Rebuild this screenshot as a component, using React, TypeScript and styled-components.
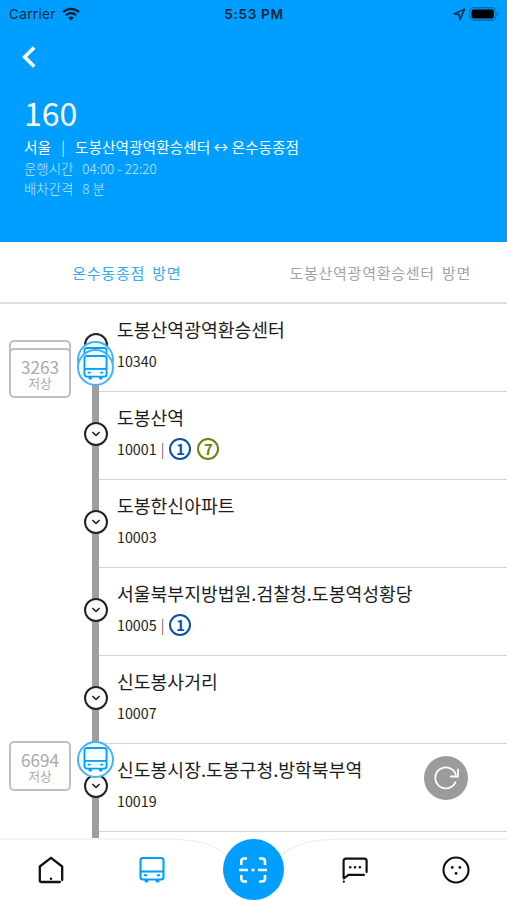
import React from 'react';
import styled, { createGlobalStyle } from 'styled-components';

const BLUE = '#009fff';
const GREY = '#9e9e9e';

const GlobalStyle = createGlobalStyle`
  * { box-sizing: border-box; }
  body { margin: 0; background: #fff; overflow: hidden; }
`;

const Screen = styled.div`
  position: relative;
  display: flex;
  flex-direction: column;
  width: 507px;
  height: 900px;
  overflow: hidden;
  background: #fff;
  color: #1c1c1c;
  font-family: 'Noto Sans CJK KR', 'Noto Sans', sans-serif;
`;

const Header = styled.header`
  flex: none;
  height: 242px;
  background: ${BLUE};
  color: #fff;
`;

const StatusBar = styled.div`
  display: grid;
  grid-template-columns: 1fr auto 1fr;
  align-items: center;
  height: 28px;
  padding: 0 8px 0 9px;
  font-family: Inter, sans-serif;
  font-size: 13.5px;
  color: #062b44;
`;

const Carrier = styled.div`
  display: flex;
  align-items: center;
  gap: 6px;
  letter-spacing: 0.35px;
`;

const Clock = styled.div`
  font-weight: 600;
  letter-spacing: 0.7px;
  color: #04243a;
`;

const StatusIcons = styled.div`
  display: flex;
  justify-content: flex-end;
  align-items: center;
  gap: 3px;
`;

const BackButton = styled.button`
  display: block;
  margin: 17px 0 0 20px;
  padding: 0;
  border: 0;
  background: none;
  width: 18px;
  height: 24px;
`;

const RouteInfo = styled.div`
  padding: 20px 0 0 24px;
`;

const RouteNumber = styled.h1`
  margin: 0;
  font-size: 32px;
  line-height: 46px;
  font-weight: 400;
`;

const RoutePath = styled.div`
  display: flex;
  margin: 1px 0 1px;
  font-size: 14.7px;
  line-height: 21px;
  white-space: pre;
`;

const Divider = styled.span`
  width: 24px;
  text-align: center;
  font-weight: 300;
`;

const Detail = styled.div`
  display: flex;
  gap: 9px;
  font-size: 13.4px;
  line-height: 20px;
  font-weight: 300;
  color: #c4e8ff;
`;

const Tabs = styled.div`
  flex: none;
  display: grid;
  grid-template-columns: 1fr 1fr;
  height: 62px;
  border-bottom: 2px solid #dedede;
`;

const Tab = styled.div<{ $active?: boolean }>`
  display: flex;
  align-items: center;
  justify-content: center;
  padding-top: 1px;
  font-size: 15px;
  letter-spacing: 0.75px;
  word-spacing: 3px;
  color: ${(p) => (p.$active ? '#35a9f5' : '#a3a3a3')};
`;

const StopList = styled.main`
  flex: 1;
  min-height: 0;
  overflow: hidden;
`;

const StopRow = styled.section`
  display: grid;
  grid-template-columns: 92px 7px 1fr;
  height: 88px;
`;

const Gutter = styled.div`
  position: relative;
`;

const Rail = styled.div<{ $first?: boolean }>`
  position: relative;
  margin-top: ${(p) => (p.$first ? 41 : 0)}px;
  background: ${GREY};
`;

const Node = styled.div<{ $top: number }>`
  position: absolute;
  left: -8px;
  top: ${(p) => p.$top}px;
  width: 24px;
  height: 24px;
  border: 2px solid #222;
  border-radius: 50%;
  background: #fff;
  display: flex;
  align-items: center;
  justify-content: center;
`;

const BusMarker = styled.div<{ $top: number }>`
  position: absolute;
  z-index: 2;
  left: -15.5px;
  top: ${(p) => p.$top}px;
  width: 37px;
  height: 37px;
  border: 2px solid #45b3f8;
  border-radius: 50%;
  background: #f7fcff;
  display: flex;
  align-items: center;
  justify-content: center;
`;

const Plate = styled.div<{ $top: number; $height: number }>`
  position: absolute;
  left: 9px;
  top: ${(p) => p.$top}px;
  width: 62px;
  height: ${(p) => p.$height}px;
  padding-top: 7px;
  border: 2px solid #c0c0c0;
  border-radius: 5px;
  background: #fff;
  color: #aaa;
  text-align: center;
`;

const PlateNumber = styled.div`
  font-size: 17.2px;
  line-height: 19px;
`;

const PlateType = styled.div`
  font-size: 12.8px;
  line-height: 13px;
`;

const StopBody = styled.div`
  padding: 11px 0 0 18px;
  border-bottom: 1px solid #d2d2d2;
`;

const StopName = styled.div`
  font-size: 18.25px;
  line-height: 28px;
  white-space: nowrap;
`;

const StopCode = styled.div`
  display: flex;
  align-items: center;
  height: 24px;
  margin-top: 5px;
  font-size: 14.3px;
  white-space: pre;
`;

const Bar = styled.span`
  margin: 0 5px 0 4px;
  font-weight: 300;
`;

const Line = styled.span<{ $color: string }>`
  display: flex;
  align-items: center;
  justify-content: center;
  width: 22px;
  height: 22px;
  margin: 2px 6px 0 0;
  padding-bottom: 1px;
  border: 2px solid ${(p) => p.$color};
  border-radius: 50%;
  color: ${(p) => p.$color};
  font-size: 15px;
  line-height: 17px;
  font-weight: 700;
`;

const RefreshButton = styled.button`
  position: absolute;
  left: 424px;
  top: 756px;
  width: 44px;
  height: 44px;
  padding: 0;
  border: 0;
  border-radius: 50%;
  background: #9b9b9b;
`;

const NavBar = styled.nav`
  position: relative;
  flex: none;
  display: grid;
  grid-template-columns: repeat(5, 1fr);
  height: 62px;
`;

const NavShape = styled.svg`
  position: absolute;
  left: 0;
  top: 0;
`;

const NavItem = styled.div`
  position: relative;
  display: flex;
  align-items: center;
  justify-content: center;
  padding-top: 1px;
`;

const ScanButton = styled.div`
  flex: none;
  width: 61px;
  height: 61px;
  border-radius: 50%;
  background: ${BLUE};
  display: flex;
  align-items: center;
  justify-content: center;
`;

const BusIcon = ({ size = 26, weight = 1.8 }: { size?: number; weight?: number }) => (
  <svg width={size} height={size} viewBox="0 0 26 26" fill="none" stroke={BLUE} strokeWidth={weight} strokeLinejoin="round">
    <rect x="1.5" y="1" width="23" height="21.5" rx="2.5" />
    <path d="M2 14.5h22" />
    <path d="M5 18.3h3M18 18.3h3" strokeWidth="2" />
    <path d="M7.5 23v2.6M18.5 23v2.6" strokeWidth="2.6" />
    <path d="M5.5 24h4M16.5 24h4" strokeWidth="1.4" />
  </svg>
);

type Stop = { name: string; code: string; lines?: { n: string; color: string }[] };

const stops: Stop[] = [
  { name: '도봉산역광역환승센터', code: '10340' },
  { name: '도봉산역', code: '10001', lines: [{ n: '1', color: '#0b52a5' }, { n: '7', color: '#6f7f10' }] },
  { name: '도봉한신아파트', code: '10003' },
  { name: '서울북부지방법원.검찰청.도봉역성황당', code: '10005', lines: [{ n: '1', color: '#0b52a5' }] },
  { name: '신도봉사거리', code: '10007' },
  { name: '신도봉시장.도봉구청.방학북부역', code: '10019' },
  { name: '', code: '' },
];

const plates: Record<number, { top: number; height: number; num?: string }[]> = {
  0: [{ top: 36, height: 50 }, { top: 44, height: 50, num: '3263' }],
  5: [{ top: -3, height: 50, num: '6694' }],
};

const markers: Record<number, number[]> = { 0: [-4, 4], 5: [-3] };

export default function App() {
  return (
    <Screen>
      <GlobalStyle />
      <Header>
        <StatusBar>
          <Carrier>
            Carrier
            <svg width="18" height="14" viewBox="0 0 18 14" fill="none" stroke="#04202f" strokeWidth="2.3">
              <path d="M1 5.1a11.5 11.5 0 0 1 16 0" />
              <path d="M3.9 8.2a7.3 7.3 0 0 1 10.2 0" />
              <path d="M9 13.6 6.2 10.8a4 4 0 0 1 5.6 0z" fill="#04202f" stroke="none" />
            </svg>
          </Carrier>
          <Clock>5:53 PM</Clock>
          <StatusIcons>
            <svg width="13" height="13" viewBox="0 0 13 13" fill="none" stroke="#06304f" strokeWidth="1.6" strokeLinejoin="round">
              <path d="M11.6 1.2 1.2 5.7l5 .9.7 5.1z" />
            </svg>
            <svg width="30" height="14" viewBox="0 0 30 14">
              <rect x="0.8" y="0.8" width="26" height="12.4" rx="3.8" fill="none" stroke="#0570b4" strokeWidth="1.4" />
              <rect x="2.5" y="2.5" width="22.4" height="9" rx="2" fill="#000" />
              <path d="M28.3 5v4q1.4-.6 1.4-2t-1.4-2z" fill="#0570b4" />
            </svg>
          </StatusIcons>
        </StatusBar>
        <BackButton aria-label="Back">
          <svg width="18" height="24" viewBox="0 0 18 24" fill="none" stroke="#fff" strokeWidth="3.6">
            <path d="M14.2 2.4 4.6 12l9.6 9.6" />
          </svg>
        </BackButton>
        <RouteInfo>
          <RouteNumber>160</RouteNumber>
          <RoutePath>
            서울<Divider>|</Divider>도봉산역광역환승센터 ↔ 온수동종점
          </RoutePath>
          <Detail><span>운행시간</span><span>04:00 - 22:20</span></Detail>
          <Detail><span>배차간격</span><span>8 분</span></Detail>
        </RouteInfo>
      </Header>
      <Tabs>
        <Tab $active>온수동종점 방면</Tab>
        <Tab>도봉산역광역환승센터 방면</Tab>
      </Tabs>
      <StopList>
        {stops.map((s, i) => (
          <StopRow key={i}>
            <Gutter>
              {plates[i]?.map((p) => (
                <Plate key={p.top} $top={p.top} $height={p.height}>
                  {p.num && <><PlateNumber>{p.num}</PlateNumber><PlateType>저상</PlateType></>}
                </Plate>
              ))}
            </Gutter>
            <Rail $first={i === 0}>
              {s.name && (
                <Node $top={i === 0 ? -12 : 30}>
                  <svg width="10" height="6" viewBox="0 0 10 6" fill="none" stroke="#222" strokeWidth="1.5">
                    <path d="M1.3 1 5 4.4 8.7 1" />
                  </svg>
                </Node>
              )}
              {markers[i]?.map((top) => (
                <BusMarker key={top} $top={top}><BusIcon size={25} weight={1.9} /></BusMarker>
              ))}
            </Rail>
            <StopBody>
              <StopName>{s.name}</StopName>
              <StopCode>
                {s.code}
                {s.lines && <Bar>|</Bar>}
                {s.lines?.map((l) => <Line key={l.n} $color={l.color}>{l.n}</Line>)}
              </StopCode>
            </StopBody>
          </StopRow>
        ))}
      </StopList>
      <RefreshButton aria-label="Refresh">
        <svg width="44" height="44" viewBox="0 0 44 44" fill="none" stroke="#fff" strokeWidth="1.8">
          <path d="M31.7 25.5A10.5 10.5 0 1 1 32 19.3" />
          <path d="M34 12.8v7.7h-7.8" />
        </svg>
      </RefreshButton>
      <NavBar>
        <NavShape width="507" height="62" viewBox="0 0 507 62">
          <path d="M-2 1H166C194 1 215 6 226 17L254 40 282 17C293 6 314 1 342 1H509V64H-2z" fill="#fff" stroke="#ececec" strokeWidth="1.2" />
        </NavShape>
        <NavItem>
          <svg width="26" height="28" viewBox="0 0 26 28" fill="none" stroke="#111" strokeWidth="2.3" strokeLinejoin="round" strokeLinecap="round">
            <path d="M22 26H3.2Q1.8 26 1.8 24.6V10.5L13 1.8 24.2 10.5V24" />
            <path d="M13 22.6v.2" strokeWidth="2.4" />
          </svg>
        </NavItem>
        <NavItem><BusIcon size={26} weight={2.1} /></NavItem>
        <NavItem>
          <ScanButton>
            <svg width="28" height="26" viewBox="0 0 28 26" fill="none" stroke="#fff" strokeWidth="2.6">
              <path d="M2.3 8V4.5Q2.3 1.5 5.3 1.5H8M20 1.5h3q3 0 3 3V8M26 18v3.5q0 3-3 3H20M8 24.5H5.3q-3 0-3-3V18" />
              <path d="M0 13h9M12.6 13h2.8M19 13h9" />
            </svg>
          </ScanButton>
        </NavItem>
        <NavItem>
          <svg width="26" height="26" viewBox="0 0 26 26" fill="none" stroke="#111" strokeWidth="2.2" strokeLinejoin="round" strokeLinecap="round">
            <path d="M1.6 20.5V4Q1.6 1.6 4 1.6H22.2Q24.6 1.6 24.6 4V15M22 17.8H6.5L1.8 21.5" />
            <path d="M1.8 24.6v.1" />
            <path d="M8.2 10.2h.1M13 10.2h.1M17.8 10.2h.1" strokeWidth="2.5" />
          </svg>
        </NavItem>
        <NavItem>
          <svg width="28" height="28" viewBox="0 0 28 28" fill="none" stroke="#111" strokeLinecap="round">
            <circle cx="14" cy="14" r="12.5" strokeWidth="2.1" />
            <path d="M10.2 11.4h.1M17.8 11.4h.1M14 17.4h.1" strokeWidth="2.7" />
          </svg>
        </NavItem>
      </NavBar>
    </Screen>
  );
}
